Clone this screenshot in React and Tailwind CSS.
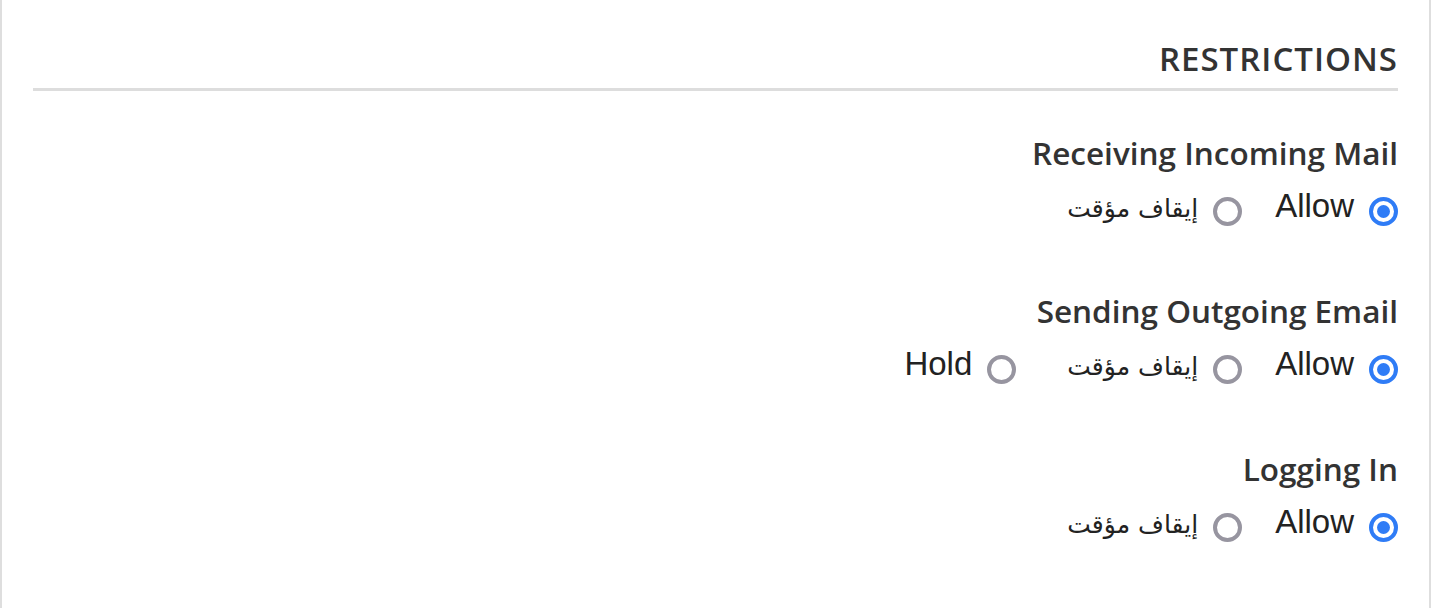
import React from 'react';

const groups = [
  { title: 'Receiving Incoming Mail', options: ['Allow', 'إيقاف مؤقت'] },
  { title: 'Sending Outgoing Email', options: ['Allow', 'إيقاف مؤقت', 'Hold'] },
  { title: 'Logging In', options: ['Allow', 'إيقاف مؤقت'] },
];

function Radio({ checked }) {
  if (checked) {
    return (
      <span className="mt-[15px] flex h-[29px] w-[29px] shrink-0 items-center justify-center rounded-full border-[4px] border-[#2f7cf6] bg-white">
        <span className="h-[13px] w-[13px] rounded-full bg-[#2f7cf6]" />
      </span>
    );
  }
  return <span className="mt-[15px] h-[29px] w-[29px] shrink-0 rounded-full border-[4px] border-[#9795a0] bg-white" />;
}

function Option({ label, checked }) {
  const arabic = /[\u0600-\u06FF]/.test(label);
  return (
    <label className="flex items-start gap-[15px]">
      <Radio checked={checked} />
      <span
        className={
          arabic
            ? "mt-[3px] pl-[18px] text-[25px] leading-[48px] text-[#222] font-['DejaVu_Sans',sans-serif]"
            : "text-[33px] leading-[48px] text-[#222] font-['Liberation_Sans','DejaVu_Sans',sans-serif]"
        }
      >
        {label}
      </span>
    </label>
  );
}

export default function App() {
  return (
    <div dir="rtl" className="h-[608px] w-full bg-white pr-[3px] font-['Open_Sans',sans-serif]">
      <div className="h-full border-x-2 border-[#dedede] px-[31px] pt-[35px]">
        <h2 className="border-b-[3px] border-[#dddddd] pb-[5px] text-[33px] font-semibold uppercase leading-[48px] tracking-[1px] text-[#333]">
          Restrictions
        </h2>
        <div className="mt-[38px] flex flex-col gap-[54px]">
          {groups.map((g) => (
            <div key={g.title}>
              <div className="text-[31.5px] font-semibold leading-[48px] text-[#333]">{g.title}</div>
              <div className="mt-[5px] flex gap-[33px]">
                {g.options.map((o, i) => (
                  <Option key={o} label={o} checked={i === 0} />
                ))}
              </div>
            </div>
          ))}
        </div>
      </div>
    </div>
  );
}
